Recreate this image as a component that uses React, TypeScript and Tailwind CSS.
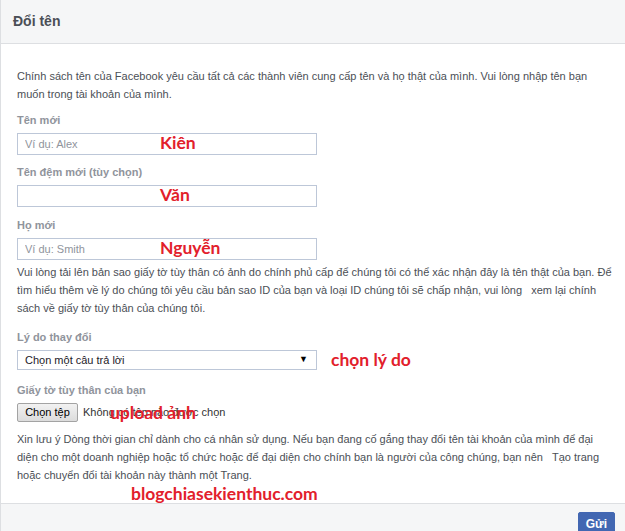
import React from "react";

const red = "text-[#e2202b] font-bold text-[17.5px] leading-none [font-family:Lato,'Open_Sans',sans-serif]";

const Label: React.FC<{ children: React.ReactNode }> = ({ children }) => (
  <div className="text-[11px] leading-4 font-bold text-[#90949c]">{children}</div>
);

const NameField: React.FC<{ label: string; placeholder?: string; note: string; top: string }> = ({
  label,
  placeholder,
  note,
  top,
}) => (
  <div className={top}>
    <Label>{label}</Label>
    <div className="relative mt-[5px] w-[300px]">
      <input
        className="block w-full h-[22px] border border-[#bdc7d8] bg-white px-[7px] text-[11px] text-[#1d2129] outline-none placeholder:text-[#90949c]"
        placeholder={placeholder}
      />
      <span className={`absolute left-[143px] top-[1px] ${red}`}>{note}</span>
    </div>
  </div>
);

export default function App() {
  return (
    <div className="w-[625px] h-[531px] overflow-hidden bg-white border-l border-[#dddfe2] flex flex-col [font-family:'Liberation_Sans',Arial,sans-serif]">
      <div className="h-[44px] shrink-0 bg-[#f5f6f7] border-b border-[#dddfe2] flex items-center pl-[12px]">
        <h2 className="text-[14px] font-bold text-[#4b4f56]">Đổi tên</h2>
      </div>

      <div className="flex-1 px-[16px] pt-[23px] text-[11px] text-[#4b4f56]">
        <p className="leading-[18px] whitespace-nowrap">
          Chính sách tên của Facebook yêu cầu tất cả các thành viên cung cấp tên và họ thật của mình. Vui lòng nhập tên bạn
          <br />
          muốn trong tài khoản của mình.
        </p>

        <NameField top="mt-[9px]" label="Tên mới" placeholder="Ví dụ: Alex" note="Kiên" />
        <NameField top="mt-[9px]" label="Tên đệm mới (tùy chọn)" note="Văn" />
        <NameField top="mt-[10px]" label="Họ mới" placeholder="Ví dụ: Smith" note="Nguyễn" />

        <p className="mt-[3px] leading-[18px] whitespace-nowrap">
          Vui lòng tải lên bản sao giấy tờ tùy thân có ảnh do chính phủ cấp để chúng tôi có thể xác nhận đây là tên thật của bạn. Để
          <br />
          tìm hiểu thêm về lý do chúng tôi yêu cầu bản sao ID của bạn và loại ID chúng tôi sẽ chấp nhận, vui lòng&nbsp;&nbsp;
          <a className="pl-[3px]">xem lại chính</a>
          <br />
          <a>sách về giấy tờ tùy thân của chúng tôi.</a>
        </p>

        <div className="mt-[12px]">
          <Label>Lý do thay đổi</Label>
          <div className="mt-[5px] flex items-center gap-[14px]">
            <div className="w-[300px] h-[20px] border border-[#bdc7d8] bg-white flex items-center justify-between pl-[7px] pr-[8px] text-[11px] text-[#1d2129]">
              <span>Chọn một câu trả lời</span>
              <span className="text-[9px] text-black">▼</span>
            </div>
            <span className={red}>chọn lý do</span>
          </div>
        </div>

        <div className="mt-[12px]">
          <Label>Giấy tờ tùy thân của bạn</Label>
          <div className="relative mt-[5px] flex items-center gap-[5px]">
            <button className="h-[19px] w-[61px] border border-[#a3a3a3] rounded-[2px] bg-gradient-to-b from-[#f2f2f2] to-[#dcdcdc] text-[11px] text-black">
              Chọn tệp
            </button>
            <span className="text-[11px] text-[#333]">Không có tệp nào được chọn</span>
            <span className={`absolute left-[93px] top-[1px] ${red}`}>upload ảnh</span>
          </div>
        </div>

        <p className="mt-[8px] leading-[18px] whitespace-nowrap">
          Xin lưu ý Dòng thời gian chỉ dành cho cá nhân sử dụng. Nếu bạn đang cố gắng thay đổi tên tài khoản của mình để đại
          <br />
          diện cho một doanh nghiệp hoặc tổ chức hoặc để đại diện cho chính bạn là người của công chúng, bạn nên&nbsp;&nbsp;
          <a className="pl-[3px]">Tạo trang</a>
          <br />
          <a>hoặc chuyển đổi tài khoản này thành một Trang.</a>
        </p>

        <div className={`mt-[1px] pl-[114px] ${red}`}>blogchiasekienthuc.com</div>
      </div>

      <div className="h-[28px] shrink-0 bg-[#f5f6f7] border-t border-[#dddfe2] flex justify-end items-start pt-[8px] pr-[10px]">
        <button className="h-[24px] px-[7px] bg-[#4267b2] border border-[#4267b2] rounded-[2px] text-white text-[12px] font-bold">
          Gửi
        </button>
      </div>
    </div>
  );
}
